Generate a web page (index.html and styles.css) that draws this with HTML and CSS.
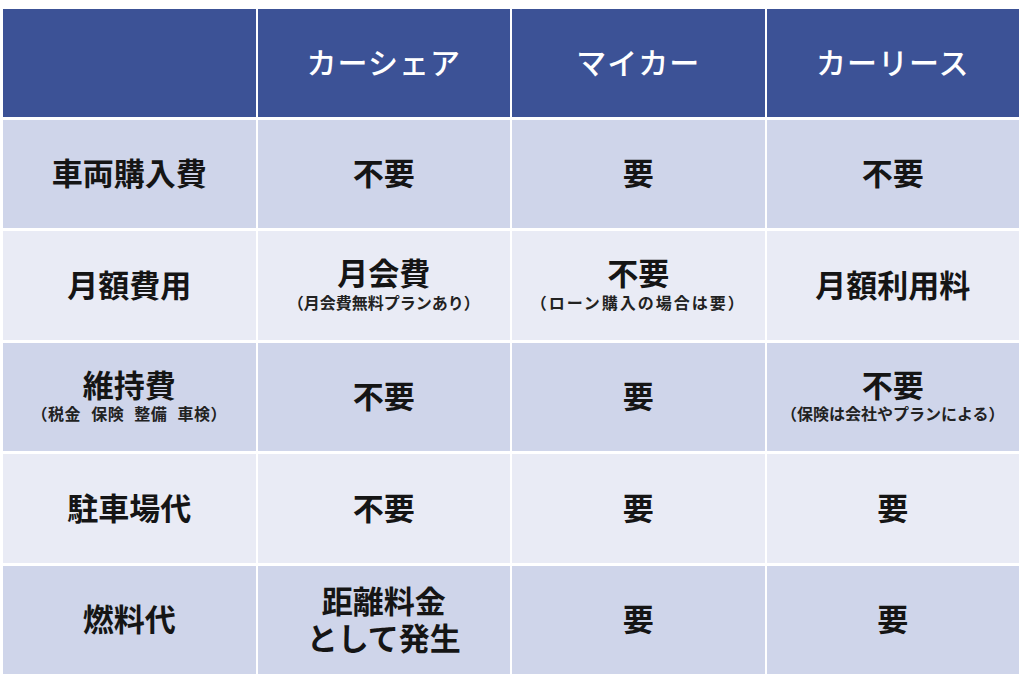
FILE: index.html
```html
<!DOCTYPE html>
<html lang="ja">
<head>
<meta charset="utf-8">
<link rel="stylesheet" href="styles.css">
</head>
<body>
<div class="table">
  <div class="cell head"></div>
  <div class="cell head">カーシェア</div>
  <div class="cell head">マイカー</div>
  <div class="cell head">カーリース</div>

  <div class="cell odd">車両購入費</div>
  <div class="cell odd">不要</div>
  <div class="cell odd">要</div>
  <div class="cell odd">不要</div>

  <div class="cell even">月額費用</div>
  <div class="cell even"><span>月会費</span><span class="sub">（月会費無料プランあり）</span></div>
  <div class="cell even"><span>不要</span><span class="sub wide">（ローン購入の場合は要）</span></div>
  <div class="cell even">月額利用料</div>

  <div class="cell odd"><span>維持費</span><span class="sub spaced">（税金 保険 整備 車検）</span></div>
  <div class="cell odd">不要</div>
  <div class="cell odd">要</div>
  <div class="cell odd"><span>不要</span><span class="sub">（保険は会社やプランによる）</span></div>

  <div class="cell even">駐車場代</div>
  <div class="cell even">不要</div>
  <div class="cell even">要</div>
  <div class="cell even">要</div>

  <div class="cell odd">燃料代</div>
  <div class="cell odd two"><span>距離料金</span><span>として発生</span></div>
  <div class="cell odd">要</div>
  <div class="cell odd">要</div>
</div>
</body>
</html>
```

FILE: styles.css
```css
html, body {
  margin: 0;
  padding: 0;
  background: #ffffff;
}
body {
  padding: 9px 5px 0 3px;
  font-family: "Noto Sans CJK JP", "Noto Sans", sans-serif;
}
.table {
  display: grid;
  grid-template-columns: repeat(4, 1fr);
  grid-template-rows: 108px repeat(5, 1fr);
  column-gap: 2px;
  row-gap: 3px;
  width: 1016px;
  height: 665px;
}
.cell {
  display: flex;
  flex-direction: column;
  align-items: center;
  justify-content: center;
  padding-bottom: 4px;
  font-size: 31px;
  font-weight: 700;
  color: #151515;
  line-height: 1.15;
}
.head {
  background: #3c5296;
  color: #ffffff;
  font-size: 30px;
  font-weight: 500;
  letter-spacing: 1px;
}
.odd {
  background: #cfd5ea;
}
.even {
  background: #e9ebf5;
}
.sub {
  margin-top: 2px;
  font-size: 16px;
  font-weight: 700;
  line-height: 1.3;
  color: #222222;
}
.wide {
  letter-spacing: 2px;
}
.spaced {
  word-spacing: 6px;
  letter-spacing: 0.5px;
}
.two span {
  line-height: 37px;
}
```
